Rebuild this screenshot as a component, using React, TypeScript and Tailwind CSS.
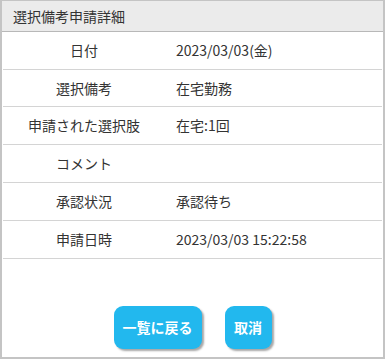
import React from "react";

const rows: [string, string][] = [
  ["日付", "2023/03/03(金)"],
  ["選択備考", "在宅勤務"],
  ["申請された選択肢", "在宅:1回"],
  ["コメント", ""],
  ["承認状況", "承認待ち"],
  ["申請日時", "2023/03/03 15:22:58"],
];

export default function App() {
  return (
    <div
      className="w-[385px] h-[359px] bg-white border-x-2 border-t border-b-2 border-[#c4c4c4] flex flex-col text-[14px] text-[#333]"
      style={{ fontFamily: '"Noto Sans CJK JP", "Noto Sans", sans-serif' }}
    >
      <div className="h-[31px] bg-[#ebebeb] border-b border-[#b8b8b8] flex items-center pl-[11px]">
        選択備考申請詳細
      </div>
      <div className="mx-px">
        {rows.map(([k, v], i) => (
          <div
            key={k}
            className={`${i === 1 ? "h-[37px]" : "h-[38px]"} border-b border-[#d4d4d4] flex items-center`}
          >
            <div className="w-[162px] text-center">{k}</div>
            <div className="pl-[11px]">{v}</div>
          </div>
        ))}
      </div>
      <div className="flex justify-center gap-[23px] mt-[47px]">
        <button className="w-[88px] h-[43px] rounded-[9px] bg-[#22b8ee] text-white font-bold shadow-[2px_2px_2px_rgba(0,0,0,0.35)]">
          一覧に戻る
        </button>
        <button className="w-[47px] h-[43px] rounded-[9px] bg-[#22b8ee] text-white font-bold shadow-[2px_2px_2px_rgba(0,0,0,0.35)]">
          取消
        </button>
      </div>
    </div>
  );
}
